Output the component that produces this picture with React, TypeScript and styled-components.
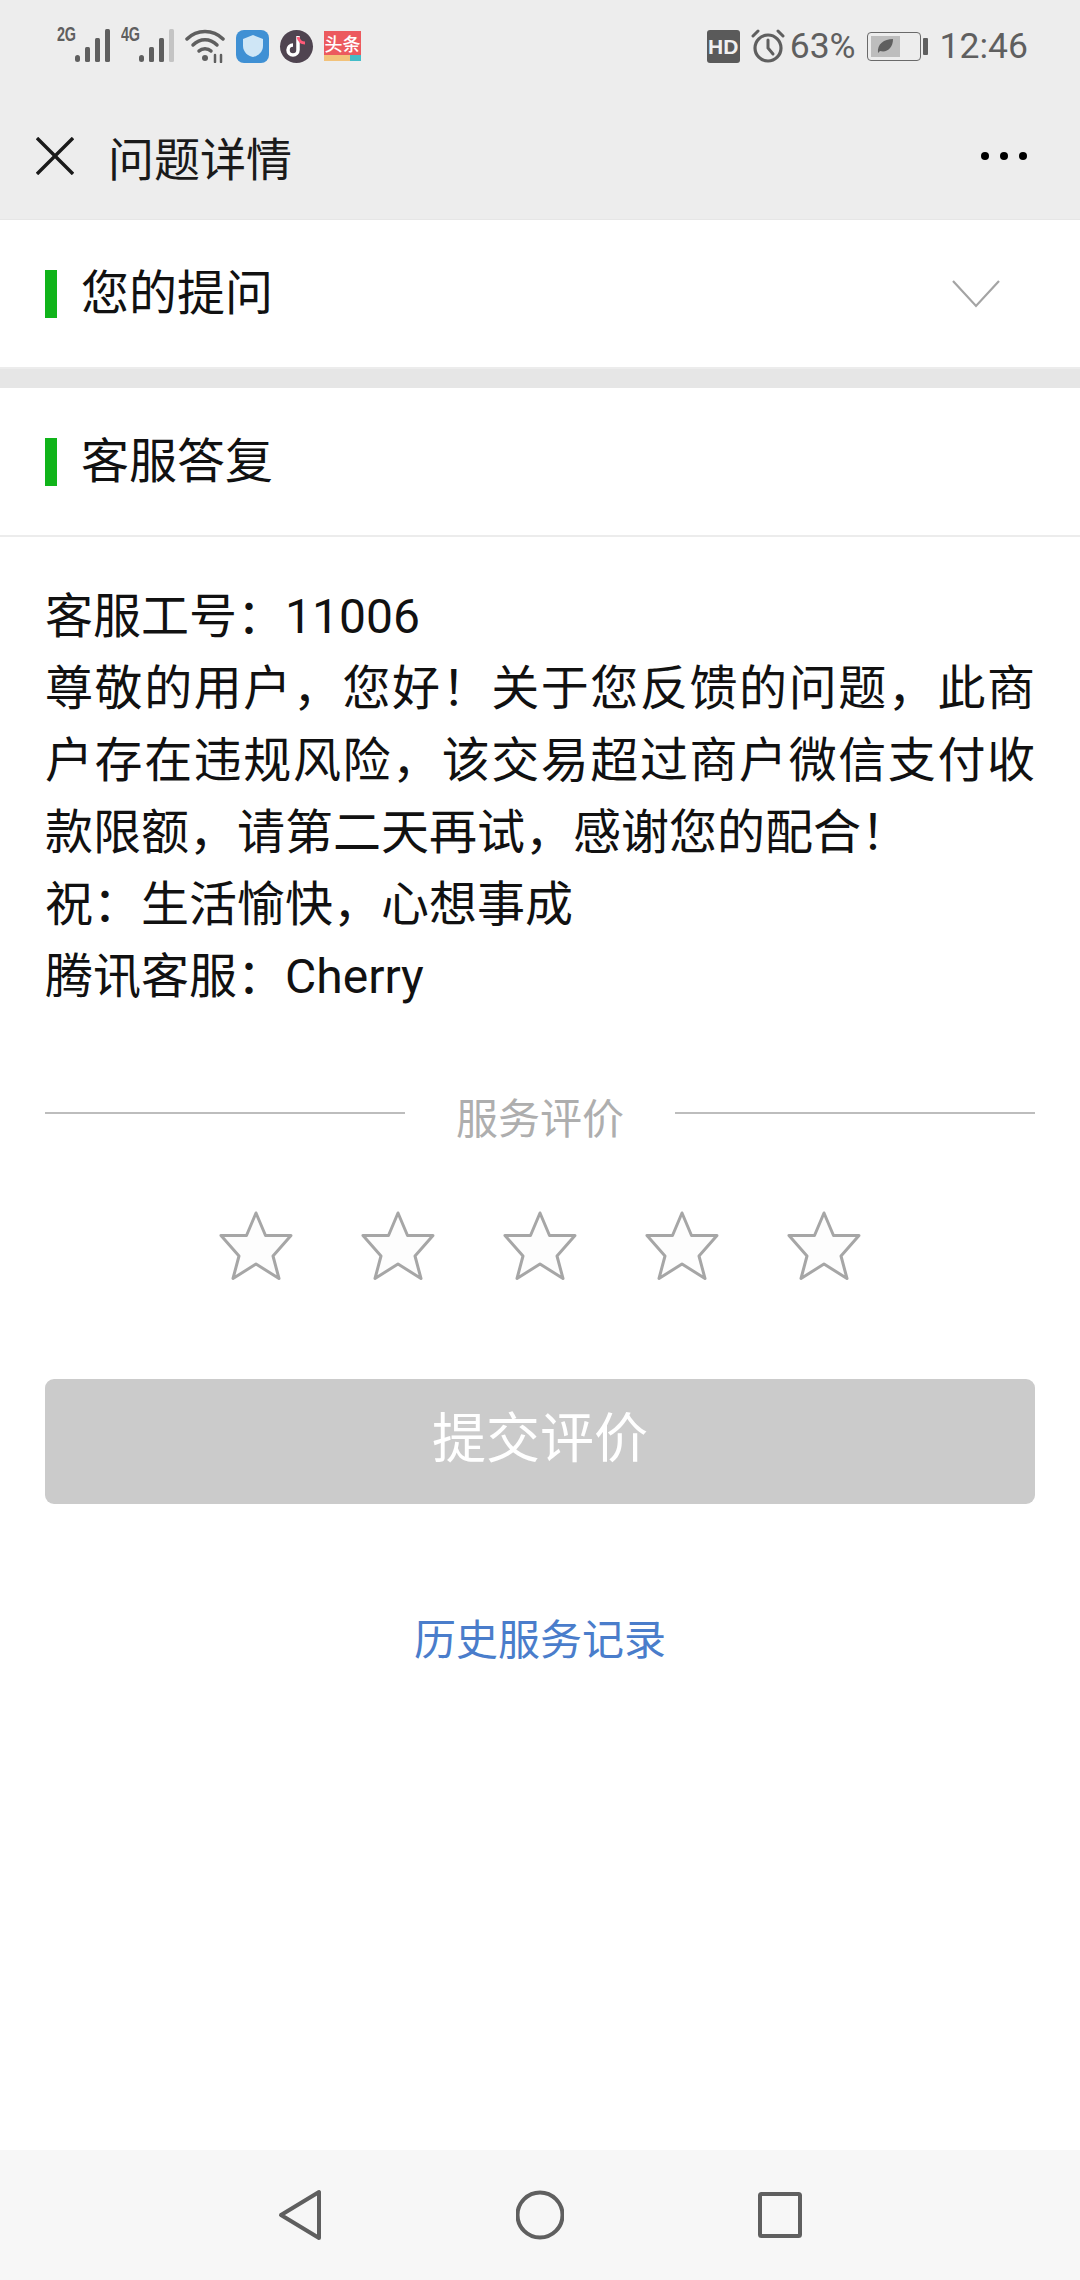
import React from "react";
import styled, { createGlobalStyle } from "styled-components";

const GlobalStyle = createGlobalStyle`
  html, body {
    margin: 0;
    padding: 0;
    background: #fff;
  }
  * {
    box-sizing: border-box;
  }
`;

const bodyFont = `Roboto, "Noto Sans CJK SC", sans-serif`;

function SignalBars({ tag, fadeLast }: { tag: string; fadeLast?: boolean }) {
  return (
    <SignalWrap>
      <SignalTag>{tag}</SignalTag>
      <svg width="35" height="34" viewBox="0 0 35 34">
        <rect x="0" y="26" width="5" height="7" rx="2.5" fill="#5f5f5f" />
        <rect x="10" y="18" width="5" height="15" rx="1.5" fill="#5f5f5f" />
        <rect x="20" y="9" width="5" height="24" rx="1.5" fill="#5f5f5f" />
        <rect x="30" y="0" width="5" height="33" rx="1.5" fill={fadeLast ? "#c4c4c4" : "#5f5f5f"} />
      </svg>
    </SignalWrap>
  );
}

function Star() {
  return (
    <svg width="74" height="70" viewBox="0 0 74 70">
      <path
        d="M37 2 L46.5 24.5 L72 24.5 L54 45 L60 67.5 L37 53 L14 67.5 L20 45 L2 24.5 L27.5 24.5 Z"
        fill="#fdfdfd"
        stroke="#a6a6a6"
        strokeWidth="3"
        strokeLinejoin="round"
      />
    </svg>
  );
}

export default function App() {
  return (
    <>
      <GlobalStyle />
      <Page>
        <Header>
          <StatusBar>
            <StatusGroup>
              <SignalBars tag="2G" />
              <SignalBars tag="4G" fadeLast />
              <svg width="40" height="34" viewBox="0 0 40 34" fill="none" stroke="#5f5f5f" strokeLinecap="round">
                <path d="M2 10 C12 0 28 0 38 10" strokeWidth="3.5" />
                <path d="M8 16 C15 9 25 9 32 16" strokeWidth="3.5" />
                <path d="M14 22 C17 19 23 19 26 22" strokeWidth="3.5" />
                <circle cx="20" cy="29" r="3" fill="#5f5f5f" stroke="none" />
                <path d="M30 26 L30 33 M36 26 L36 33" strokeWidth="2.5" />
              </svg>
              <ShieldTile>
                <svg width="22" height="24" viewBox="0 0 22 24">
                  <path d="M11 1 L21 5 V12 C21 18 16 22 11 23 C6 22 1 18 1 12 V5 Z" fill="#cfe6f6" />
                </svg>
              </ShieldTile>
              <TikTokDot>
                <svg width="22" height="24" viewBox="0 0 22 24" fill="none">
                  <path d="M12 2 V16 A5 5 0 1 1 7 11" stroke="#fff" strokeWidth="3.5" />
                  <path d="M12 3 C13 7 16 9 19 9" stroke="#ff5a78" strokeWidth="3" />
                </svg>
              </TikTokDot>
              <NewsTile>
                <NewsName>头条</NewsName>
                <NewsStrip />
              </NewsTile>
            </StatusGroup>
            <StatusGroup>
              <HdBadge>HD</HdBadge>
              <svg width="34" height="34" viewBox="0 0 34 34" fill="none" stroke="#5f5f5f" strokeLinecap="round">
                <circle cx="17" cy="19" r="13" strokeWidth="3.2" />
                <path d="M17 11 V19 L22 25" strokeWidth="3" />
                <path d="M2 7 L7 2 M32 7 L27 2" strokeWidth="3" />
              </svg>
              <StatusText $tight>63%</StatusText>
              <Battery>
                <BatteryBody>
                  <BatteryFill>
                    <svg width="18" height="18" viewBox="0 0 18 18">
                      <path d="M2 16 C1 7 8 2 17 2 C17 11 11 16 4 14 Z" fill="#5f5f5f" />
                    </svg>
                  </BatteryFill>
                </BatteryBody>
                <BatteryNub />
              </Battery>
              <StatusText>12:46</StatusText>
            </StatusGroup>
          </StatusBar>
          <NavBar>
            <svg width="38" height="38" viewBox="0 0 38 38" stroke="#1a1a1a" strokeWidth="3.4">
              <path d="M1 1 L37 37 M37 1 L1 37" />
            </svg>
            <NavTitle>问题详情</NavTitle>
            <MoreDots>
              <Dot />
              <Dot />
              <Dot />
            </MoreDots>
          </NavBar>
        </Header>

        <SectionHead>
          <GreenMark />
          <SectionTitle>您的提问</SectionTitle>
          <svg width="48" height="30" viewBox="0 0 48 30" fill="none" stroke="#a4a4a4" strokeWidth="2.2">
            <path d="M1 2 L24 27 L47 2" />
          </svg>
        </SectionHead>
        <SectionGap />
        <SectionHead>
          <GreenMark />
          <SectionTitle>客服答复</SectionTitle>
        </SectionHead>

        <Reply>
          <ReplyLine>客服工号：11006</ReplyLine>
          <ReplyLine>
            尊敬的用户，您好！关于您反馈的问题，此商户存在违规风险，该交易超过商户微信支付收款限额，请第二天再试，感谢您的配合！
          </ReplyLine>
          <ReplyLine>祝：生活愉快，心想事成</ReplyLine>
          <ReplyLine>腾讯客服：Cherry</ReplyLine>
        </Reply>

        <RatingHead>
          <RatingRule />
          <RatingLabel>服务评价</RatingLabel>
          <RatingRule />
        </RatingHead>
        <Stars>
          <Star />
          <Star />
          <Star />
          <Star />
          <Star />
        </Stars>
        <SubmitButton disabled>提交评价</SubmitButton>
        <HistoryLink>历史服务记录</HistoryLink>

        <BottomNav>
          <svg width="48" height="52" viewBox="0 0 48 52" fill="none" stroke="#5f5f5f" strokeWidth="4" strokeLinejoin="round">
            <path d="M43 3 V49 L5 26 Z" />
          </svg>
          <svg width="48" height="52" viewBox="0 0 48 52" fill="none" stroke="#5f5f5f" strokeWidth="4">
            <circle cx="24" cy="26" r="22.5" />
          </svg>
          <svg width="48" height="52" viewBox="0 0 48 52" fill="none" stroke="#5f5f5f" strokeWidth="4" strokeLinejoin="round">
            <rect x="4" y="5" width="40" height="42" rx="1.5" />
          </svg>
        </BottomNav>
      </Page>
    </>
  );
}

const Page = styled.div`
  width: 1080px;
  height: 2280px;
  overflow: hidden;
  display: flex;
  flex-direction: column;
  background: #fff;
  font-family: ${bodyFont};
  color: #111;
`;

const Header = styled.header`
  background: #ededed;
  border-bottom: 1px solid #e6e6e6;
`;

const StatusBar = styled.div`
  height: 92px;
  padding: 0 52px 0 57px;
  display: flex;
  align-items: center;
  justify-content: space-between;
`;

const StatusGroup = styled.div`
  display: flex;
  align-items: center;
  gap: 11px;
`;

const SignalWrap = styled.div`
  position: relative;
  width: 53px;
  height: 34px;
  display: flex;
  justify-content: flex-end;
`;

const SignalTag = styled.span`
  position: absolute;
  left: 0;
  top: -6px;
  font: 700 20px "Liberation Sans", sans-serif;
  color: #5f5f5f;
  letter-spacing: -0.5px;
  transform: scaleX(0.72);
  transform-origin: left center;
`;

const ShieldTile = styled.div`
  width: 33px;
  height: 33px;
  border-radius: 8px;
  background: #3f90d4;
  display: flex;
  align-items: center;
  justify-content: center;
`;

const TikTokDot = styled.div`
  width: 33px;
  height: 33px;
  border-radius: 50%;
  background: #4f4450;
  display: flex;
  align-items: center;
  justify-content: center;
`;

const NewsTile = styled.div`
  width: 37px;
  height: 30px;
  display: flex;
  flex-direction: column;
  background: #ec5a5e;
`;

const NewsName = styled.span`
  flex: 1;
  font: 500 18px/24px "Noto Sans CJK SC", sans-serif;
  color: #fff;
  text-align: center;
  white-space: nowrap;
`;

const NewsStrip = styled.div`
  height: 6px;
  background: linear-gradient(90deg, #f2c27a 70%, #43bcc8 70%);
`;

const HdBadge = styled.span`
  width: 33px;
  height: 33px;
  border-radius: 3px;
  background: #5a5a5a;
  color: #f0f0f0;
  font: 700 21px/33px "Liberation Sans", sans-serif;
  text-align: center;
`;

const StatusText = styled.span<{ $tight?: boolean }>`
  margin-left: ${(p) => (p.$tight ? "-6px" : "0")};
  font: 400 35.5px/40px Roboto, sans-serif;
  color: #5f5f5f;
`;

const Battery = styled.div`
  display: flex;
  align-items: center;
  gap: 2px;
  margin-right: 1px;
`;

const BatteryBody = styled.div`
  width: 54px;
  height: 29px;
  padding: 3px;
  border: 1.5px solid #6a6a6a;
  border-radius: 4px;
`;

const BatteryFill = styled.div`
  width: 63%;
  height: 100%;
  background: #bdbdbd;
  display: flex;
  align-items: center;
  justify-content: center;
`;

const BatteryNub = styled.div`
  width: 5px;
  height: 17px;
  background: #5f5f5f;
  border-radius: 1px;
`;

const NavBar = styled.div`
  height: 127px;
  padding: 0 53px 0 36px;
  display: flex;
  align-items: center;
`;

const NavTitle = styled.h1`
  margin: 0 0 0 34px;
  flex: 1;
  font: 400 46px/60px "Noto Sans CJK SC", sans-serif;
  color: #1a1a1a;
`;

const MoreDots = styled.div`
  display: flex;
  gap: 11px;
`;

const Dot = styled.span`
  width: 8px;
  height: 8px;
  border-radius: 50%;
  background: #000;
`;

const SectionHead = styled.div`
  height: 149px;
  padding: 0 80px 0 45px;
  display: flex;
  align-items: center;
  border-bottom: 2px solid #ececec;
  background: #fff;
`;

const GreenMark = styled.span`
  width: 12px;
  height: 48px;
  background: #10b41a;
`;

const SectionTitle = styled.h2`
  flex: 1;
  margin: 0 0 10px 24px;
  font: 400 48px/60px "Noto Sans CJK SC", sans-serif;
  color: #111;
`;

const SectionGap = styled.div`
  height: 19px;
  background: #e6e6e6;
`;

const Reply = styled.div`
  padding: 44px 45px 0;
  font-size: 48px;
  line-height: 72px;
  color: #111;
`;

const ReplyLine = styled.div`
  text-align: justify;
`;

const RatingHead = styled.div`
  margin-top: 82px;
  padding: 0 45px;
  display: flex;
  gap: 51px;
`;

const RatingRule = styled.span`
  flex: 1;
  height: 2px;
  margin-top: 17px;
  background: #bdbdbd;
`;

const RatingLabel = styled.span`
  font: 400 42px/42px "Noto Sans CJK SC", sans-serif;
  color: #aeaeae;
`;

const Stars = styled.div`
  margin-top: 74px;
  display: flex;
  justify-content: center;
  gap: 68px;
`;

const SubmitButton = styled.button`
  margin: 98px 45px 0;
  height: 125px;
  padding: 0 0 14px;
  border: none;
  border-radius: 9px;
  background: #cbcbcb;
  color: #fff;
  font: 400 54px/1 "Noto Sans CJK SC", sans-serif;
`;

const HistoryLink = styled.a`
  margin-top: 103px;
  text-align: center;
  font: 400 42px/60px "Noto Sans CJK SC", sans-serif;
  color: #4a7dcb;
`;

const BottomNav = styled.nav`
  margin-top: auto;
  height: 130px;
  background: #f7f7f7;
  display: flex;
  align-items: center;
  justify-content: center;
  gap: 192px;
`;
